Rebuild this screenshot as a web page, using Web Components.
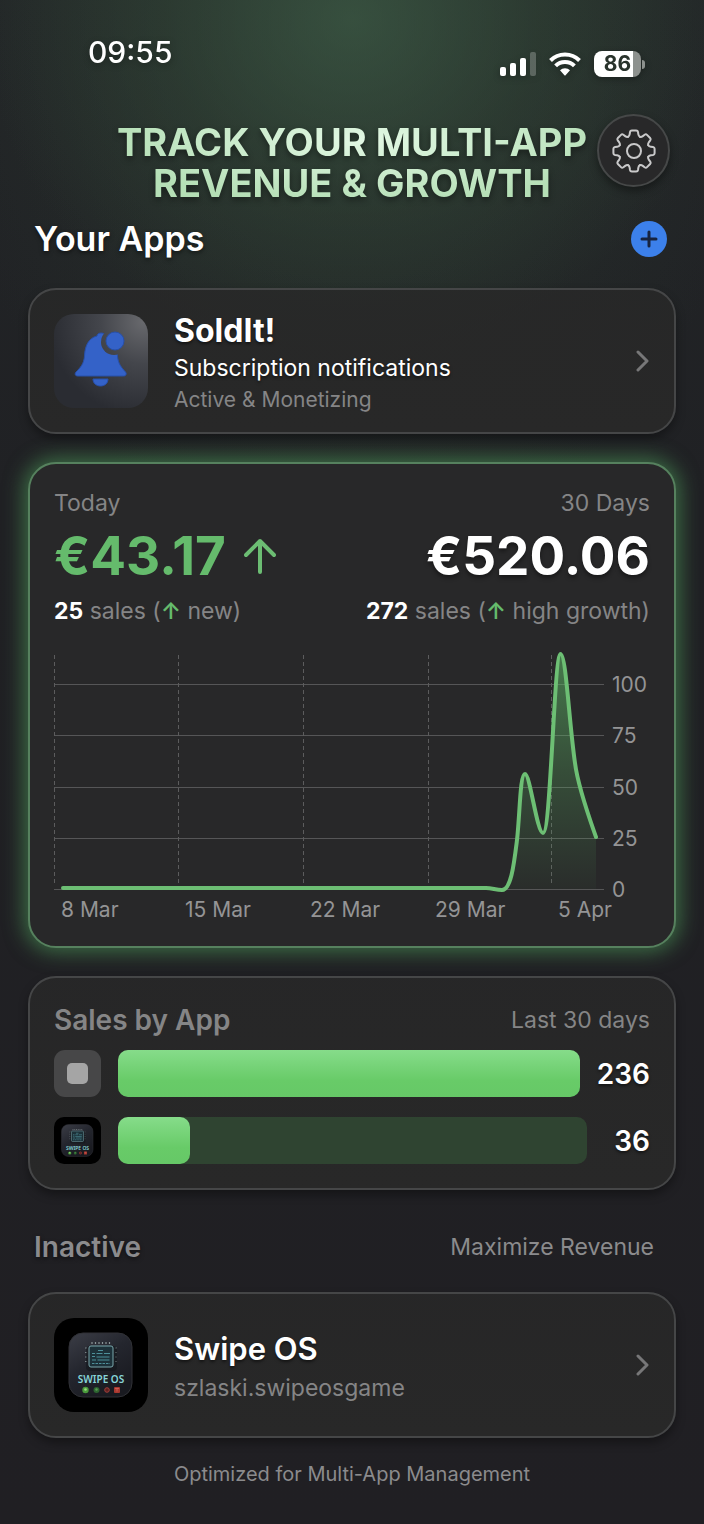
<!DOCTYPE html>
<html lang="en">
<head>
<meta charset="utf-8">
<meta name="viewport" content="width=device-width, initial-scale=1">
<title>Your Apps</title>
<style>
  body {
    margin: 0;
    background: #202023;
    color: #fff;
    font-family: Inter, "Liberation Sans", sans-serif;
  }
</style>
</head>
<body>
<revenue-page>
  <status-bar slot="status" time="09:55" battery="86"></status-bar>

  <page-header slot="header">TRACK YOUR MULTI-APP<br>REVENUE &amp; GROWTH</page-header>

  <section-heading>
    Your Apps
    <add-button slot="action"></add-button>
  </section-heading>

  <glass-card>
    <app-row>
      <bell-icon slot="icon"></bell-icon>
      <span slot="name">SoldIt!</span>
      <span slot="info">Subscription notifications</span>
      <span slot="note">Active &amp; Monetizing</span>
    </app-row>
  </glass-card>

  <glass-card glow>
    <revenue-stats></revenue-stats>
    <sales-chart></sales-chart>
  </glass-card>

  <glass-card>
    <sales-by-app>
      <sales-bar count="236" max="236"><blank-icon slot="icon"></blank-icon></sales-bar>
      <sales-bar count="36" max="236"><swipe-icon slot="icon"></swipe-icon></sales-bar>
    </sales-by-app>
  </glass-card>

  <section-heading muted>
    Inactive
    <span slot="action">Maximize Revenue</span>
  </section-heading>

  <glass-card>
    <app-row muted>
      <swipe-icon slot="icon"></swipe-icon>
      <span slot="name">Swipe OS</span>
      <span slot="note">szlaski.swipeosgame</span>
    </app-row>
  </glass-card>

  <span slot="footer">Optimized for Multi-App Management</span>
</revenue-page>

<script>
// Page shell: background glow, header area and the stack of cards
class RevenuePage extends HTMLElement {
  constructor() {
    super();
    this.attachShadow({ mode: "open" });
    this.shadowRoot.innerHTML = `
      <style>
        :host {
          display: block;
          min-height: 100vh;
          box-sizing: border-box;
          padding: 38px 28px 36px;
          background:
            radial-gradient(ellipse 370px 330px at 50% 20px, rgba(64, 98, 74, 0.6), rgba(54, 80, 60, 0.36) 50%, transparent),
            radial-gradient(ellipse 420px 560px at 50% 0, rgba(48, 66, 52, 0.5), transparent),
            linear-gradient(#222527, #202124 500px, #201f23);
        }
        main {
          display: flex;
          flex-direction: column;
          gap: 28px;
        }
        footer {
          margin-top: 22px;
          text-align: center;
          font-size: 20px;
          line-height: 28px;
          color: #8b8b8d;
        }
      </style>
      <slot name="status"></slot>
      <slot name="header"></slot>
      <main><slot></slot></main>
      <footer><slot name="footer"></slot></footer>
    `;
  }
}
customElements.define("revenue-page", RevenuePage);

class StatusBar extends HTMLElement {
  constructor() {
    super();
    this.attachShadow({ mode: "open" });
    this.shadowRoot.innerHTML = `
      <style>
        :host {
          display: flex;
          justify-content: space-between;
          align-items: flex-start;
          padding: 0 31px 0 60px;
          filter: drop-shadow(0 2px 3px rgba(0, 0, 0, 0.3));
        }
        time {
          font-size: 30px;
          font-weight: 500;
          line-height: 28px;
        }
        .icons {
          display: flex;
          align-items: center;
          gap: 13px;
          padding-top: 12px;
          height: 28px;
        }
        .battery {
          display: flex;
          align-items: center;
          gap: 1px;
        }
        .level {
          width: 47px;
          border-radius: 8px;
          background: linear-gradient(90deg, #fff 84%, #8d918e 84%);
          color: #29332c;
          font-size: 21px;
          font-weight: 700;
          line-height: 26px;
          text-align: center;
        }
        .cap {
          width: 3px;
          height: 9px;
          border-radius: 0 4px 4px 0;
          background: #8d918e;
        }
      </style>
      <time>${this.getAttribute("time")}</time>
      <div class="icons">
        <svg width="36" height="26" viewBox="0 0 36 26" fill="#fff" aria-hidden="true">
          <rect x="0" y="16" width="6" height="9" rx="2"/>
          <rect x="10" y="12" width="6" height="13" rx="2"/>
          <rect x="20" y="7" width="6" height="18" rx="2"/>
          <rect x="30" y="1" width="6" height="24" rx="2" opacity="0.24"/>
        </svg>
        <svg width="32" height="26" viewBox="0 0 32 26" aria-hidden="true">
          <g fill="none" stroke="#fff" stroke-width="4">
            <path d="M1.500 9.500a20.500 20.500 0 0 1 29 0"/>
            <path d="M6.600 14.800a13.300 13.300 0 0 1 18.800 0"/>
          </g>
          <path d="M11 19.300a7 7 0 0 1 10 0l-4.200 4.700a1 1 0 0 1-1.600 0z" fill="#fff"/>
        </svg>
        <div class="battery">
          <span class="level">${this.getAttribute("battery")}</span>
          <span class="cap"></span>
        </div>
      </div>
    `;
  }
}
customElements.define("status-bar", StatusBar);

class PageHeader extends HTMLElement {
  constructor() {
    super();
    this.attachShadow({ mode: "open" });
    // The eight teeth of the gear are one outline turned in 45 degree steps
    const tooth = "M-5.900-14.200Q-4.600-14.900-4.300-16.800L-4-19Q-3.700-20.600-2.200-20.600H2.200Q3.700-20.600 4-19L4.300-16.800Q4.600-14.900 5.900-14.200";
    const teeth = [0, 45, 90, 135, 180, 225, 270, 315]
      .map((angle) => `<path d="${tooth}" transform="rotate(${angle})"/>`)
      .join("");
    this.shadowRoot.innerHTML = `
      <style>
        :host {
          display: grid;
          margin: 36px 0 17px;
        }
        h1 {
          grid-area: 1 / 1;
          margin: 8px 0 0;
          font-size: 38px;
          font-weight: 700;
          line-height: 41px;
          text-align: center;
          color: transparent;
          background: radial-gradient(ellipse 260px 64px at 52% 22%, #e2f8e4, #b5dfb6);
          -webkit-background-clip: text;
          background-clip: text;
          filter: drop-shadow(0 3px 3px rgba(0, 0, 0, 0.4));
        }
        button {
          grid-area: 1 / 1;
          justify-self: end;
          align-self: start;
          display: grid;
          place-items: center;
          width: 73px;
          height: 73px;
          margin-right: 6px;
          padding: 0;
          border: 2px solid #464848;
          border-radius: 50%;
          background: #282829;
          box-shadow: 0 4px 8px rgba(0, 0, 0, 0.4);
          z-index: 1;
        }
      </style>
      <h1><slot></slot></h1>
      <button aria-label="Settings">
        <svg width="46" height="46" viewBox="-23 -23 46 46" fill="none" stroke="#c9c9ca" stroke-width="2" stroke-linecap="round" aria-hidden="true">
          ${teeth}
          <circle r="7"/>
        </svg>
      </button>
    `;
  }
}
customElements.define("page-header", PageHeader);

class SectionHeading extends HTMLElement {
  constructor() {
    super();
    this.attachShadow({ mode: "open" });
    this.shadowRoot.innerHTML = `
      <style>
        :host {
          display: flex;
          justify-content: space-between;
          align-items: center;
          padding: 0 9px 3px 6px;
        }
        h2 {
          margin: 0;
          font-size: 34px;
          font-weight: 600;
          line-height: 36px;
          text-shadow: 0 2px 4px rgba(0, 0, 0, 0.5);
        }
        :host([muted]) {
          padding: 12px 22px 0 6px;
          color: #8b8b8d;
          font-size: 23px;
        }
        :host([muted]) h2 {
          font-size: 28px;
          line-height: 34px;
        }
      </style>
      <h2><slot></slot></h2>
      <slot name="action"></slot>
    `;
  }
}
customElements.define("section-heading", SectionHeading);

class AddButton extends HTMLElement {
  constructor() {
    super();
    this.attachShadow({ mode: "open" });
    this.shadowRoot.innerHTML = `
      <style>
        :host {
          display: block;
        }
        button {
          display: grid;
          place-items: center;
          width: 36px;
          height: 36px;
          padding: 0;
          border: 0;
          border-radius: 50%;
          background: #3c80ea;
        }
      </style>
      <button aria-label="Add app">
        <svg width="18" height="18" viewBox="0 0 18 18" stroke="#172440" stroke-width="3" stroke-linecap="round" aria-hidden="true">
          <path d="M9 2v14M2 9h14"/>
        </svg>
      </button>
    `;
  }
}
customElements.define("add-button", AddButton);

class GlassCard extends HTMLElement {
  constructor() {
    super();
    this.attachShadow({ mode: "open" });
    this.shadowRoot.innerHTML = `
      <style>
        :host {
          display: block;
          padding: 24px;
          border: 2px solid #454647;
          border-radius: 28px;
          background: linear-gradient(rgba(40, 40, 40, 0.82), #282828);
          box-shadow: 0 5px 10px rgba(0, 0, 0, 0.35);
        }
        :host([glow]) {
          border-color: #56815e;
          background: #282829;
          box-shadow: 0 0 20px 4px rgba(76, 150, 88, 0.65);
        }
      </style>
      <slot></slot>
    `;
  }
}
customElements.define("glass-card", GlassCard);

class AppRow extends HTMLElement {
  constructor() {
    super();
    this.attachShadow({ mode: "open" });
    this.shadowRoot.innerHTML = `
      <style>
        :host {
          --icon-size: 94px;
          display: block;
        }
        a {
          display: flex;
          align-items: center;
          gap: 26px;
          color: inherit;
          text-decoration: none;
        }
        .text {
          flex: 1;
          display: flex;
          flex-direction: column;
          margin-bottom: -4px;
        }
        .name {
          font-size: 32px;
          font-weight: 700;
          line-height: 34px;
          text-shadow: 0 2px 3px rgba(0, 0, 0, 0.5);
        }
        .info {
          font-size: 23px;
          line-height: 40px;
          text-shadow: 0 2px 3px rgba(0, 0, 0, 0.5);
        }
        .note {
          font-size: 21px;
          line-height: 24px;
          color: #858586;
        }
        :host([muted]) .name {
          font-size: 31px;
          font-weight: 600;
          line-height: 42px;
        }
        :host([muted]) .note {
          font-size: 23px;
          line-height: 36px;
        }
      </style>
      <a href="#">
        <slot name="icon"></slot>
        <div class="text">
          <span class="name"><slot name="name"></slot></span>
          <span class="info"><slot name="info"></slot></span>
          <span class="note"><slot name="note"></slot></span>
        </div>
        <svg width="14" height="24" viewBox="0 0 14 24" fill="none" stroke="#777778" stroke-width="3" stroke-linecap="round" stroke-linejoin="round" aria-hidden="true">
          <path d="M2 3l9 9-9 9"/>
        </svg>
      </a>
    `;
    if (this.hasAttribute("muted")) {
      this.shadowRoot.querySelector(".info").remove();
    }
  }
}
customElements.define("app-row", AppRow);

class BellIcon extends HTMLElement {
  constructor() {
    super();
    this.attachShadow({ mode: "open" });
    this.shadowRoot.innerHTML = `
      <style>
        :host {
          display: block;
          width: var(--icon-size);
          height: var(--icon-size);
        }
        svg {
          display: block;
          width: 100%;
          height: 100%;
        }
      </style>
      <svg viewBox="0 0 94 94" aria-hidden="true">
        <defs>
          <radialGradient id="tile" cx="0.95" cy="0.08" r="1">
            <stop offset="0" stop-color="#68696d"/>
            <stop offset="0.45" stop-color="#44464c"/>
            <stop offset="1" stop-color="#2a2c32"/>
          </radialGradient>
          <mask id="cut">
            <rect width="94" height="94" fill="#fff"/>
            <circle cx="60" cy="28" r="13" fill="#000"/>
          </mask>
        </defs>
        <rect width="94" height="94" rx="20" fill="url(#tile)"/>
        <g fill="#3462c8" stroke="#2750ab" stroke-width="1">
          <path mask="url(#cut)" d="M43 22C43 18 51 18 52 22C60 25 63 32 63.500 42C64 50 68 54 71.500 58C73 60 72 62 69.500 62H24C21 62 20.500 60 22 58C26 54 30 50 30.500 42C31 31 35 24 43 22Z"/>
          <circle cx="61" cy="27" r="9"/>
          <path d="M39 65H54C54 69.500 50.500 72 46.500 72C42.500 72 39 69.500 39 65Z"/>
        </g>
      </svg>
    `;
  }
}
customElements.define("bell-icon", BellIcon);

class SwipeIcon extends HTMLElement {
  constructor() {
    super();
    this.attachShadow({ mode: "open" });
    this.shadowRoot.innerHTML = `
      <style>
        :host {
          display: block;
          width: var(--icon-size);
          height: var(--icon-size);
        }
        svg {
          display: block;
          width: 100%;
          height: 100%;
        }
        text {
          font: 600 10px "Noto Sans", sans-serif;
        }
      </style>
      <svg viewBox="0 0 94 94" role="img" aria-label="Swipe OS">
        <defs>
          <linearGradient id="tile" x1="0" y1="0" x2="0.6" y2="1">
            <stop offset="0" stop-color="#3b3d46"/>
            <stop offset="0.5" stop-color="#24262e"/>
            <stop offset="1" stop-color="#191a20"/>
          </linearGradient>
        </defs>
        <rect width="94" height="94" rx="20" fill="#000"/>
        <rect x="15" y="15" width="63" height="64" rx="14" fill="url(#tile)" stroke="#303136" stroke-width="1"/>
        <path d="M38 24v2M41.500 24v2M45 24v2M48.500 24v2M52 24v2M55.500 24v2" stroke="#8a9497" stroke-width="1.200"/>
        <path d="M31 30h2M31 34.500h2M31 39h2M31 43.500h2M61 30h2M61 34.500h2M61 39h2M61 43.500h2" stroke="#7a8487" stroke-width="1.200"/>
        <rect x="32" y="28" width="31" height="25" rx="4" fill="#101317" opacity="0.5"/>
        <rect x="35" y="28" width="24" height="21" rx="2" fill="#1d3139" stroke="#79a7ac" stroke-width="1"/>
        <g stroke="#4d8f99" stroke-width="1.200">
          <path d="M44 32.500h5M38 35.500h3M42.500 35.500h6M50 35.500h6M38 38.500h3M42.500 39h13M38 42h4M43.500 42h12"/>
          <path d="M38 45.500h18" stroke-dasharray="2.500 1"/>
        </g>
        <text x="47" y="65" text-anchor="middle" fill="#87d5d8">SWIPE OS</text>
        <circle cx="31.500" cy="72" r="3.200" fill="#4a9a3c"/>
        <circle cx="31.500" cy="71.500" r="1.300" fill="#9bdc7d"/>
        <circle cx="42.500" cy="72" r="3" fill="#2d6430"/>
        <circle cx="42.500" cy="71.500" r="1.200" fill="#599b52"/>
        <circle cx="53" cy="72" r="2.300" fill="#5e2020" stroke="#a03f3a" stroke-width="1"/>
        <rect x="60" y="69" width="6" height="6" rx="1" fill="#a8382f"/>
        <path d="M61 70.500h4M63 70.500v3" stroke="#d0665a" stroke-width="0.800"/>
      </svg>
    `;
  }
}
customElements.define("swipe-icon", SwipeIcon);

class BlankIcon extends HTMLElement {
  constructor() {
    super();
    this.attachShadow({ mode: "open" });
    this.shadowRoot.innerHTML = `
      <style>
        :host {
          display: grid;
          place-items: center;
          width: var(--icon-size);
          height: var(--icon-size);
          border-radius: 11px;
          background: #474748;
        }
        i {
          width: 21px;
          height: 21px;
          border-radius: 5px;
          background: #a5a5a5;
        }
      </style>
      <i></i>
    `;
  }
}
customElements.define("blank-icon", BlankIcon);

class RevenueStats extends HTMLElement {
  constructor() {
    super();
    this.attachShadow({ mode: "open" });
    this.shadowRoot.innerHTML = `
      <style>
        :host {
          display: flex;
          justify-content: space-between;
          margin-bottom: 24px;
          color: #858586;
          font-size: 23px;
          line-height: 30px;
        }
        .amount {
          display: flex;
          align-items: center;
          gap: 18px;
          margin: 8px 0 10px;
          color: #fff;
          font-size: 53px;
          font-weight: 700;
          line-height: 60px;
          text-shadow: 0 3px 4px rgba(0, 0, 0, 0.4);
        }
        .today .amount {
          color: #65bb6c;
          text-shadow: none;
        }
        .month {
          text-align: right;
        }
        .month .amount {
          justify-content: flex-end;
        }
        b {
          color: #fff;
          font-weight: 700;
        }
        .up {
          color: #65bb6c;
          font-weight: 600;
        }
      </style>
      <div class="today">
        <div>Today</div>
        <div class="amount">
          €43.17
          <svg width="32" height="36" viewBox="0 0 32 36" fill="none" stroke="#6cbd73" stroke-width="4" stroke-linecap="round" stroke-linejoin="round" aria-hidden="true">
            <path d="M16 34V3M2 17L16 3l14 14"/>
          </svg>
        </div>
        <div><b>25</b> sales (<span class="up">↑</span> new)</div>
      </div>
      <div class="month">
        <div>30 Days</div>
        <div class="amount">€520.06</div>
        <div><b>272</b> sales (<span class="up">↑</span> high growth)</div>
      </div>
    `;
  }
}
customElements.define("revenue-stats", RevenueStats);

class SalesChart extends HTMLElement {
  constructor() {
    super();
    this.attachShadow({ mode: "open" });
    const levels = [[100, 34], [75, 85], [50, 137], [25, 188], [0, 239]];
    const weeks = [["8 Mar", 0], ["15 Mar", 124], ["22 Mar", 249], ["29 Mar", 374], ["5 Apr", 497]];
    const rise = "C438 238 442 240 448 240C457 240 460 214 463 190C466 163 466 124 471 124C476 124 483 183 489 183C497 183 500 4 506.500 4C512 4 515 72 521 113C524 137 536 170 542 187";

    this.shadowRoot.innerHTML = `
      <style>
        :host {
          display: block;
        }
        svg {
          display: block;
          width: 100%;
          overflow: visible;
        }
        text {
          fill: #949495;
          font-size: 21px;
        }
        .level {
          stroke: #565657;
          stroke-width: 1;
        }
        .week {
          stroke: #5c5c5d;
          stroke-width: 1;
          stroke-dasharray: 4 3;
        }
        .line {
          fill: none;
          stroke: #6dbf74;
          stroke-width: 4;
          stroke-linecap: round;
          stroke-linejoin: round;
        }
      </style>
      <svg viewBox="0 0 596 272" role="img" aria-label="Sales per day">
        <defs>
          <linearGradient id="area" x1="0" y1="0" x2="0" y2="1">
            <stop offset="0" stop-color="#5fbd68" stop-opacity="0.55"/>
            <stop offset="0.5" stop-color="#5fbd68" stop-opacity="0.25"/>
            <stop offset="1" stop-color="#5fbd68" stop-opacity="0.03"/>
          </linearGradient>
        </defs>
        ${levels.map(([value, y]) => `
          <path class="level" d="M0 ${y}.500H550"/>
          <text x="558" y="${y + 8}">${value}</text>
        `).join("")}
        ${weeks.map(([label, x]) => `
          <path class="week" d="M${x}.500 5V236"/>
          <text x="${x + 7}" y="267">${label}</text>
        `).join("")}
        <path fill="url(#area)" d="M432 238${rise}V239H432Z"/>
        <path class="line" d="M9 238H432${rise}"/>
      </svg>
    `;
  }
}
customElements.define("sales-chart", SalesChart);

class SalesByApp extends HTMLElement {
  constructor() {
    super();
    this.attachShadow({ mode: "open" });
    this.shadowRoot.innerHTML = `
      <style>
        :host {
          display: flex;
          flex-direction: column;
          gap: 20px;
          color: #858586;
        }
        header {
          display: flex;
          justify-content: space-between;
          align-items: center;
          font-size: 23px;
          line-height: 36px;
          margin-bottom: -8px;
        }
        h3 {
          margin: 0;
          font-size: 28px;
          font-weight: 600;
        }
      </style>
      <header><h3>Sales by App</h3><span>Last 30 days</span></header>
      <slot></slot>
    `;
  }
}
customElements.define("sales-by-app", SalesByApp);

class SalesBar extends HTMLElement {
  constructor() {
    super();
    this.attachShadow({ mode: "open" });
    const count = this.getAttribute("count");
    const share = (count / this.getAttribute("max")) * 100;
    this.shadowRoot.innerHTML = `
      <style>
        :host {
          --icon-size: 47px;
          display: flex;
          align-items: center;
          gap: 17px;
        }
        .track {
          flex: 1;
          height: 47px;
          border-radius: 10px;
          background: #2f4431;
        }
        .fill {
          height: 100%;
          border-radius: 10px;
          background: linear-gradient(#86dc8a, #68cb68 65%, #66c867);
        }
        output {
          min-width: 46px;
          color: #fff;
          font-size: 28px;
          font-weight: 600;
          text-align: right;
          text-shadow: 0 2px 3px rgba(0, 0, 0, 0.5);
        }
      </style>
      <slot name="icon"></slot>
      <div class="track"><div class="fill" style="width: ${share}%"></div></div>
      <output>${count}</output>
    `;
  }
}
customElements.define("sales-bar", SalesBar);
</script>
</body>
</html>
